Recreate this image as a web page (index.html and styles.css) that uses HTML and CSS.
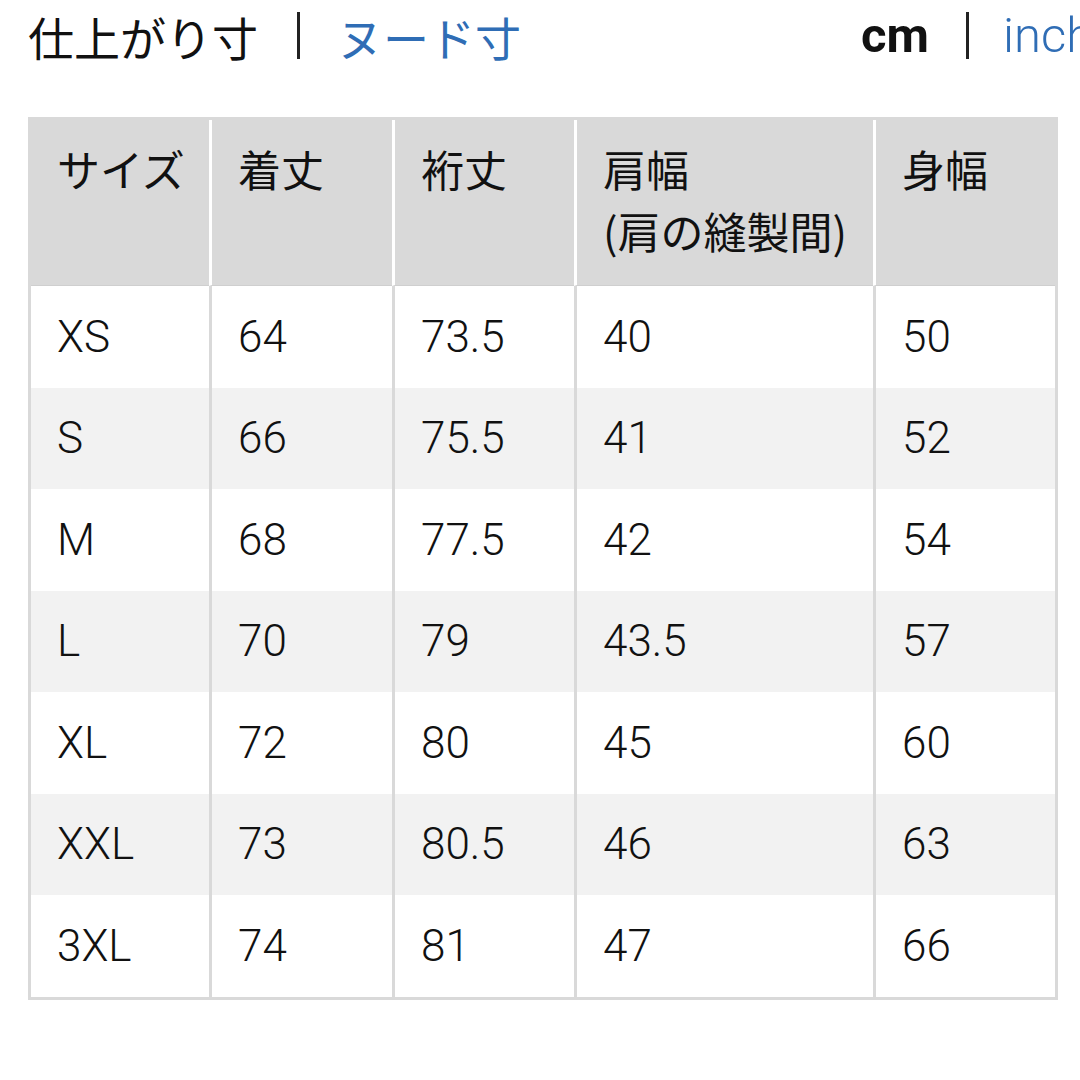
FILE: index.html
```html
<!DOCTYPE html>
<html lang="ja">
<head>
<meta charset="utf-8">
<title>サイズ表</title>
<link rel="stylesheet" href="styles.css">
</head>
<body>
<div class="page">
  <div class="topbar">
    <div class="tabs">
      <span class="tab active">仕上がり寸</span>
      <span class="bar"></span>
      <span class="tab link">ヌード寸</span>
    </div>
    <div class="units">
      <span class="unit active">cm</span>
      <span class="bar"></span>
      <span class="unit link">inch</span>
    </div>
  </div>
  <table class="size-table">
    <colgroup>
      <col class="c1"><col class="c2"><col class="c3"><col class="c4"><col class="c5">
    </colgroup>
    <thead>
      <tr>
        <th>サイズ</th>
        <th>着丈</th>
        <th>裄丈</th>
        <th>肩幅<br>(肩の縫製間)</th>
        <th>身幅</th>
      </tr>
    </thead>
    <tbody>
      <tr><td>XS</td><td>64</td><td>73.5</td><td>40</td><td>50</td></tr>
      <tr><td>S</td><td>66</td><td>75.5</td><td>41</td><td>52</td></tr>
      <tr><td>M</td><td>68</td><td>77.5</td><td>42</td><td>54</td></tr>
      <tr><td>L</td><td>70</td><td>79</td><td>43.5</td><td>57</td></tr>
      <tr><td>XL</td><td>72</td><td>80</td><td>45</td><td>60</td></tr>
      <tr><td>XXL</td><td>73</td><td>80.5</td><td>46</td><td>63</td></tr>
      <tr><td>3XL</td><td>74</td><td>81</td><td>47</td><td>66</td></tr>
    </tbody>
  </table>
</div>
</body>
</html>
```

FILE: styles.css
```css
html, body {
  margin: 0;
  padding: 0;
  background: #ffffff;
  overflow: hidden;
}

body {
  font-family: "Noto Sans CJK JP", "Noto Sans", sans-serif;
  color: #1a1a1a;
}

.page {
  padding-left: 28px;
  width: 1200px;
}

.topbar {
  display: flex;
  align-items: center;
  height: 71px;
  line-height: 1;
}

.tabs, .units {
  display: flex;
  align-items: center;
  white-space: nowrap;
}

.tab {
  font-size: 46px;
  font-weight: 400;
  color: #111;
}

.tab.link {
  color: #2f6db5;
}

.bar {
  display: inline-block;
  width: 3px;
  height: 47px;
  background: #222;
}

.tabs .bar {
  margin: 0 37px 0 39px;
}

.units {
  margin-left: 340px;
}

.unit {
  font-family: "Roboto", "Liberation Sans", sans-serif;
  font-size: 49px;
}

.unit.active {
  font-weight: 700;
  color: #111;
}

.unit.link {
  font-weight: 300;
  color: #2f6db5;
}

.units .bar {
  margin: 0 34px 0 37px;
}

.size-table {
  margin-top: 46px;
  border-collapse: separate;
  border-spacing: 0;
  border: 3px solid #d9d9d9;
  table-layout: fixed;
  width: 1030px;
}

.c1 { width: 178px; }
.c2 { width: 183px; }
.c3 { width: 182px; }
.c4 { width: 299px; }
.c5 { width: 182px; }

.size-table th,
.size-table td {
  text-align: left;
  padding: 0 0 0 26px;
  font-weight: 400;
}

.size-table th {
  background: #d9d9d9;
  font-size: 43px;
  line-height: 62px;
  vertical-align: top;
  height: 166px;
  padding-top: 17px;
  box-sizing: border-box;
  border-bottom: 1px solid #cfcfcf;
  color: #111;
}

.size-table th + th {
  border-left: 3px solid #ffffff;
}

.size-table td {
  font-family: "Roboto", "Liberation Sans", "Noto Sans CJK JP", sans-serif;
  font-weight: 300;
  font-size: 44px;
  height: 101.5px;
  vertical-align: middle;
  color: #111;
}

.size-table td + td {
  border-left: 3px solid #d9d9d9;
}

.size-table tbody tr:nth-child(even) td {
  background: #f2f2f2;
}
```
